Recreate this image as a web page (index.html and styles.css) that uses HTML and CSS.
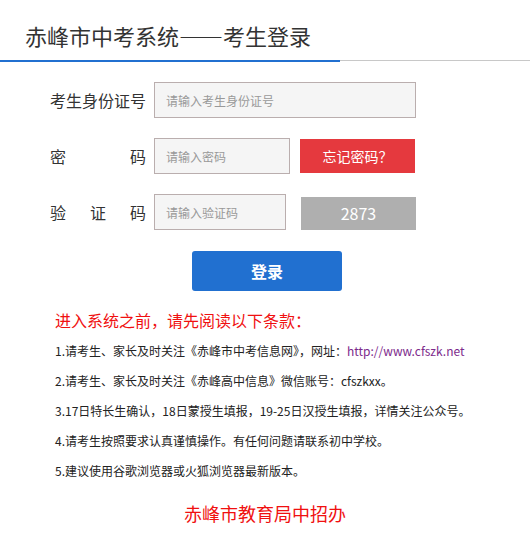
FILE: index.html
```html
<!DOCTYPE html>
<html lang="zh-CN">
<head>
  <meta charset="UTF-8">
  <title>赤峰市中考系统——考生登录</title>
  <link rel="stylesheet" href="styles.css">
</head>
<body>
  <div class="header">
    <h1>赤峰市中考系统——考生登录</h1>
  </div>

  <!-- 登录表单 -->
  <form class="login-form" onsubmit="return false">
    <div class="row">
      <label class="label" for="idcard">考生身份证号</label>
      <input class="field field-id" id="idcard" type="text" placeholder="请输入考生身份证号">
    </div>
    <div class="row">
      <label class="label" for="pwd">密 码</label>
      <input class="field field-pwd" id="pwd" type="password" placeholder="请输入密码">
      <a class="btn-forget" href="#">忘记密码？</a>
    </div>
    <div class="row">
      <label class="label" for="code">验 证 码</label>
      <input class="field field-code" id="code" type="text" placeholder="请输入验证码">
      <span class="captcha">2873</span>
    </div>
    <button class="btn-login" type="submit">登录</button>
  </form>

  <!-- 须知 -->
  <div class="notice">
    <h2>进入系统之前，请先阅读以下条款：</h2>
    <p>1.请考生、家长及时关注《赤峰市中考信息网》，网址：<a href="http://www.cfszk.net">http://www.cfszk.net</a></p>
    <p>2.请考生、家长及时关注《赤峰高中信息》微信账号：cfszkxx。</p>
    <p>3.17日特长生确认，18日蒙授生填报，19-25日汉授生填报，详情关注公众号。</p>
    <p>4.请考生按照要求认真谨慎操作。有任何问题请联系初中学校。</p>
    <p>5.建议使用谷歌浏览器或火狐浏览器最新版本。</p>
  </div>

  <div class="footer">赤峰市教育局中招办</div>
</body>
</html>
```

FILE: styles.css
```css
body { margin: 0; font-family: "Noto Sans CJK SC", "Noto Sans", sans-serif; color: #333; background: #fff; }

.header { border-bottom: 1px solid #c8c8c8; }
.header h1 { width: 315px; height: 36px; margin: 0 0 -2px; padding: 24px 0 0 25px; border-bottom: 2px solid #2170d0; font-size: 22px; font-weight: normal; line-height: 22px; color: #333; }

.login-form { padding: 21px 0 0 50px; }
.row { display: flex; align-items: center; height: 36px; margin-bottom: 20px; }
.row:last-of-type { margin-bottom: 0; }
.label { flex-shrink: 0; width: 96px; margin-right: 8px; font-size: 16px; line-height: 20px; white-space: nowrap; text-align-last: justify; color: #333; }
.field { flex-shrink: 0; box-sizing: border-box; height: 36px; padding: 0 11px; border: 1px solid #baaeae; background: #f5f5f5; font-family: inherit; font-size: 12px; color: #333; outline: none; }
.field::placeholder { color: #999; }
.field-id { width: 262px; }
.field-pwd { width: 136px; }
.field-code { width: 132px; }

.btn-forget { width: 115px; height: 34px; margin-left: 10px; background: #e5393e; color: #fff; font-size: 14px; line-height: 34px; text-align: center; text-decoration: none; }
.captcha { width: 115px; height: 33px; margin-left: 15px; margin-top: 3px; background: #afafaf; color: #fff; font-size: 16px; line-height: 33px; text-align: center; }

.btn-login { display: block; width: 150px; height: 40px; margin: 21px 0 0 142px; border: none; border-radius: 3px; background: #2170d0; color: #fff; font-family: inherit; font-size: 16px; font-weight: bold; cursor: pointer; }

.notice { padding: 18px 0 0 55px; }
.notice h2 { margin: 0 0 5px; font-size: 16px; font-weight: normal; line-height: 22px; color: #f01010; }
.notice p { margin: 0; font-size: 12px; line-height: 30px; color: #222; }
.notice a { color: #7d2a8c; text-decoration: none; }

.footer { margin-top: 14px; text-align: center; font-size: 18px; color: #f01010; }
```
